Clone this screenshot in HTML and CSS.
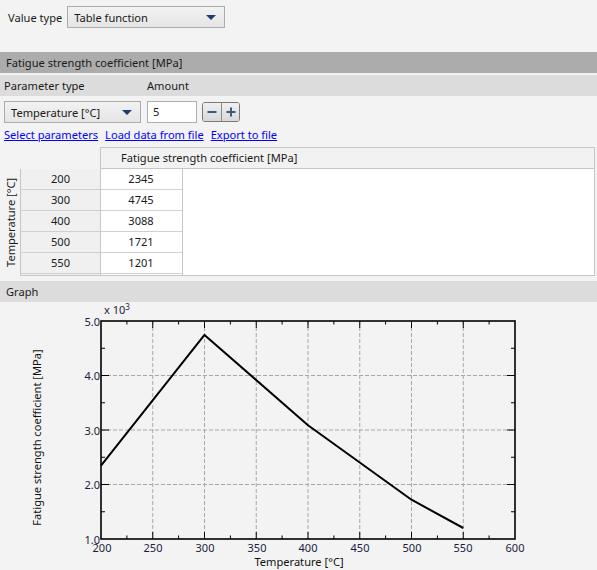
FILE: index.html
```html
<!DOCTYPE html>
<html>
<head>
<meta charset="utf-8">
<link rel="stylesheet" href="styles.css">
</head>
<body>
<div class="top">
  <span class="lbl">Value type</span>
  <div class="select select-wide"><span>Table function</span><i class="arrow"></i></div>
</div>

<div class="bar bar-dark">Fatigue strength coefficient [MPa]</div>
<div class="bar bar-light param-head"><span class="ph-type">Parameter type</span><span>Amount</span></div>

<div class="param-row">
  <div class="select select-temp"><span>Temperature [°C]</span><i class="arrow"></i></div>
  <div class="input">5</div>
  <div class="spin">
    <div class="spin-btn">
      <svg width="10" height="10" viewBox="0 0 10 10"><rect x="0.5" y="4" width="9" height="2" fill="#3b5b7a"/></svg>
    </div>
    <div class="spin-btn">
      <svg width="10" height="10" viewBox="0 0 10 10"><rect x="0.5" y="4" width="9" height="2" fill="#3b5b7a"/><rect x="4" y="0.5" width="2" height="9" fill="#3b5b7a"/></svg>
    </div>
  </div>
</div>

<div class="links">
  <a href="#">Select parameters</a>
  <a href="#">Load data from file</a>
  <a href="#">Export to file</a>
</div>

<div class="tbl">
  <div class="tbl-corner"></div>
  <div class="tbl-colhead">Fatigue strength coefficient [MPa]</div>
  <div class="tbl-vlabel"><span>Temperature [°C]</span></div>
  <div class="tbl-rows">
    <div class="tr"><div class="rh">200</div><div class="td">2345</div></div>
    <div class="tr"><div class="rh">300</div><div class="td">4745</div></div>
    <div class="tr"><div class="rh">400</div><div class="td">3088</div></div>
    <div class="tr"><div class="rh">500</div><div class="td">1721</div></div>
    <div class="tr"><div class="rh">550</div><div class="td">1201</div></div>
    <div class="tr tr-end"><div class="rh"></div><div class="td"></div></div>
  </div>
</div>

<div class="bar bar-light bar-graph">Graph</div>

<div class="chart">
<svg width="597" height="268" viewBox="0 0 597 268" class="chart-svg">
  <g stroke="#a8a8a8" stroke-width="1" stroke-dasharray="4 2" fill="none">
    <line x1="152.75" y1="19" x2="152.75" y2="237"/>
    <line x1="204.5" y1="19" x2="204.5" y2="237"/>
    <line x1="256.25" y1="19" x2="256.25" y2="237"/>
    <line x1="308" y1="19" x2="308" y2="237"/>
    <line x1="359.75" y1="19" x2="359.75" y2="237"/>
    <line x1="411.5" y1="19" x2="411.5" y2="237"/>
    <line x1="463.25" y1="19" x2="463.25" y2="237"/>
    <line x1="101" y1="73.5" x2="515" y2="73.5"/>
    <line x1="101" y1="128" x2="515" y2="128"/>
    <line x1="101" y1="182.5" x2="515" y2="182.5"/>
  </g>
  <g stroke="#000" stroke-width="1">
    <path d="M152.75 237v-7M204.5 237v-7M256.25 237v-7M308 237v-7M359.75 237v-7M411.5 237v-7M463.25 237v-7"/>
    <path d="M152.75 19v7M204.5 19v7M256.25 19v7M308 19v7M359.75 19v7M411.5 19v7M463.25 19v7"/>
    <path d="M126.9 237v-3.5M178.6 237v-3.5M230.4 237v-3.5M282.1 237v-3.5M333.9 237v-3.5M385.6 237v-3.5M437.4 237v-3.5M489.1 237v-3.5"/>
    <path d="M126.9 19v3.5M178.6 19v3.5M230.4 19v3.5M282.1 19v3.5M333.9 19v3.5M385.6 19v3.5M437.4 19v3.5M489.1 19v3.5"/>
    <path d="M101 73.5h8M101 128h8M101 182.5h8M515 73.5h-8M515 128h-8M515 182.5h-8"/>
    <path d="M101 46.25h4M101 100.75h4M101 155.25h4M101 209.75h4M515 46.25h-4M515 100.75h-4M515 155.25h-4M515 209.75h-4"/>
  </g>
  <rect x="101" y="19" width="414" height="218" fill="none" stroke="#000" stroke-width="1.6"/>
  <polyline points="101,163.7 204.5,32.9 308,123.2 411.5,197.7 463.25,226" fill="none" stroke="#000" stroke-width="2" stroke-linejoin="round"/>
  <g class="tick-lbl" text-anchor="end">
    <text x="100" y="23.5">5.0</text>
    <text x="100" y="78">4.0</text>
    <text x="100" y="132.5">3.0</text>
    <text x="100" y="187">2.0</text>
    <text x="100" y="241.5">1.0</text>
  </g>
  <g class="tick-lbl" text-anchor="middle">
    <text x="102" y="250">200</text>
    <text x="153" y="250">250</text>
    <text x="205" y="250">300</text>
    <text x="257" y="250">350</text>
    <text x="308" y="250">400</text>
    <text x="360" y="250">450</text>
    <text x="412" y="250">500</text>
    <text x="463" y="250">550</text>
    <text x="515" y="250">600</text>
  </g>
  <text class="tick-lbl" x="104" y="12">x 10<tspan dy="-4" font-size="8">3</tspan></text>
  <text class="axis-title" x="299" y="264" text-anchor="middle">Temperature [°C]</text>
  <text class="axis-title" transform="translate(41 135.5) rotate(-90)" text-anchor="middle">Fatigue strength coefficient [MPa]</text>
</svg>
</div>
</body>
</html>
```

FILE: styles.css
```css
* { box-sizing: border-box; }
html, body { margin: 0; padding: 0; }
body {
  width: 597px;
  height: 570px;
  overflow: hidden;
  background: #f3f3f3;
  font-family: "Noto Sans", "DejaVu Sans", sans-serif;
  font-size: 11.1px;
  color: #1a1a1a;
}
.top {
  display: flex;
  align-items: center;
  gap: 5px;
  padding: 6px 0 0 8px;
  height: 28px;
}
.select {
  height: 22px;
  border: 1px solid #acacac;
  background: linear-gradient(#f2f2f2, #e5e5e5);
  display: flex;
  align-items: center;
  justify-content: space-between;
  padding: 0 8px 0 6px;
}
.select-wide { width: 158px; }
.arrow {
  width: 0; height: 0;
  border-left: 5px solid transparent;
  border-right: 5px solid transparent;
  border-top: 5px solid #1e3c70;
}
.bar {
  height: 21px;
  line-height: 21px;
  padding-left: 6px;
}
.bar-dark { background: #acacac; margin-top: 24px; }
.bar-light { background: #dcdcdc; }
.param-head { margin-top: 2px; display: flex; padding-left: 4px; }
.ph-type { width: 143px; }
.param-row {
  display: flex;
  align-items: center;
  margin-top: 5px;
  padding-left: 4px;
  height: 22px;
}
.select-temp { width: 137px; }
.input {
  width: 50px;
  height: 22px;
  margin-left: 6px;
  background: #fff;
  border: 1px solid #abadb3;
  padding-left: 5px;
  line-height: 20px;
}
.spin {
  display: flex;
  margin-left: 5px;
  height: 20px;
  border: 1px solid #7a7a7a;
  border-radius: 3px;
  overflow: hidden;
}
.spin-btn {
  width: 18px;
  display: flex;
  align-items: center;
  justify-content: center;
  background: linear-gradient(#f0f0f0, #d8d8d8);
}
.spin-btn + .spin-btn { border-left: 1px solid #8a8a8a; }
.links {
  display: flex;
  gap: 7px;
  padding-left: 4px;
  margin-top: 3px;
  height: 20px;
  line-height: 18px;
}
.links a { color: #0000ff; text-decoration: underline; }
.tbl {
  display: grid;
  grid-template-columns: 20px 80px 1fr;
  grid-template-rows: 22px auto;
  margin-top: 1px;
  width: 595px;
}
.tbl-corner { grid-column: 1 / 3; }
.tbl-colhead {
  grid-column: 3;
  background: #f2f2f2;
  border: 1px solid #c6c6c6;
  padding-left: 20px;
  line-height: 20px;
}
.tbl-vlabel {
  grid-column: 1;
  grid-row: 2;
  display: flex;
  align-items: center;
  justify-content: center;
  writing-mode: vertical-rl;
  transform: rotate(180deg);
}
.tbl-rows {
  grid-column: 2 / 4;
  grid-row: 2;
  display: flex;
  flex-direction: column;
  position: relative;
  background: #fff;
}
.tbl-rows::after {
  content: "";
  position: absolute;
  left: 80px; right: 0; top: 0; bottom: 0;
  border: 1px solid #c6c6c6;
  border-top: none;
  pointer-events: none;
}
.tr { display: flex; height: 21px; flex: none; }
.rh {
  width: 80px;
  background: #f0f0f0;
  border-left: 1px solid #c6c6c6;
  border-bottom: 1px solid #d0d0d0;
  text-align: center;
  line-height: 20px;
}
.td {
  width: 83px;
  background: #fff;
  border-right: 1px solid #c6c6c6;
  border-bottom: 1px solid #d0d0d0;
  text-align: center;
  line-height: 19px;
}
.tr-end { height: 2px; background: #fff; }
.tr-end .rh { border-bottom: 1px solid #c6c6c6; }
.tr-end .td { border-bottom: none; }
.bar-graph { margin-top: 5px; }
.chart { height: 268px; }
.chart-svg { display: block; }
.tick-lbl { font-family: "Noto Sans", "DejaVu Sans", sans-serif; font-size: 11px; fill: #1c1c3a; }
.axis-title { font-family: "Noto Sans", "DejaVu Sans", sans-serif; font-size: 11.1px; fill: #111; }
```
